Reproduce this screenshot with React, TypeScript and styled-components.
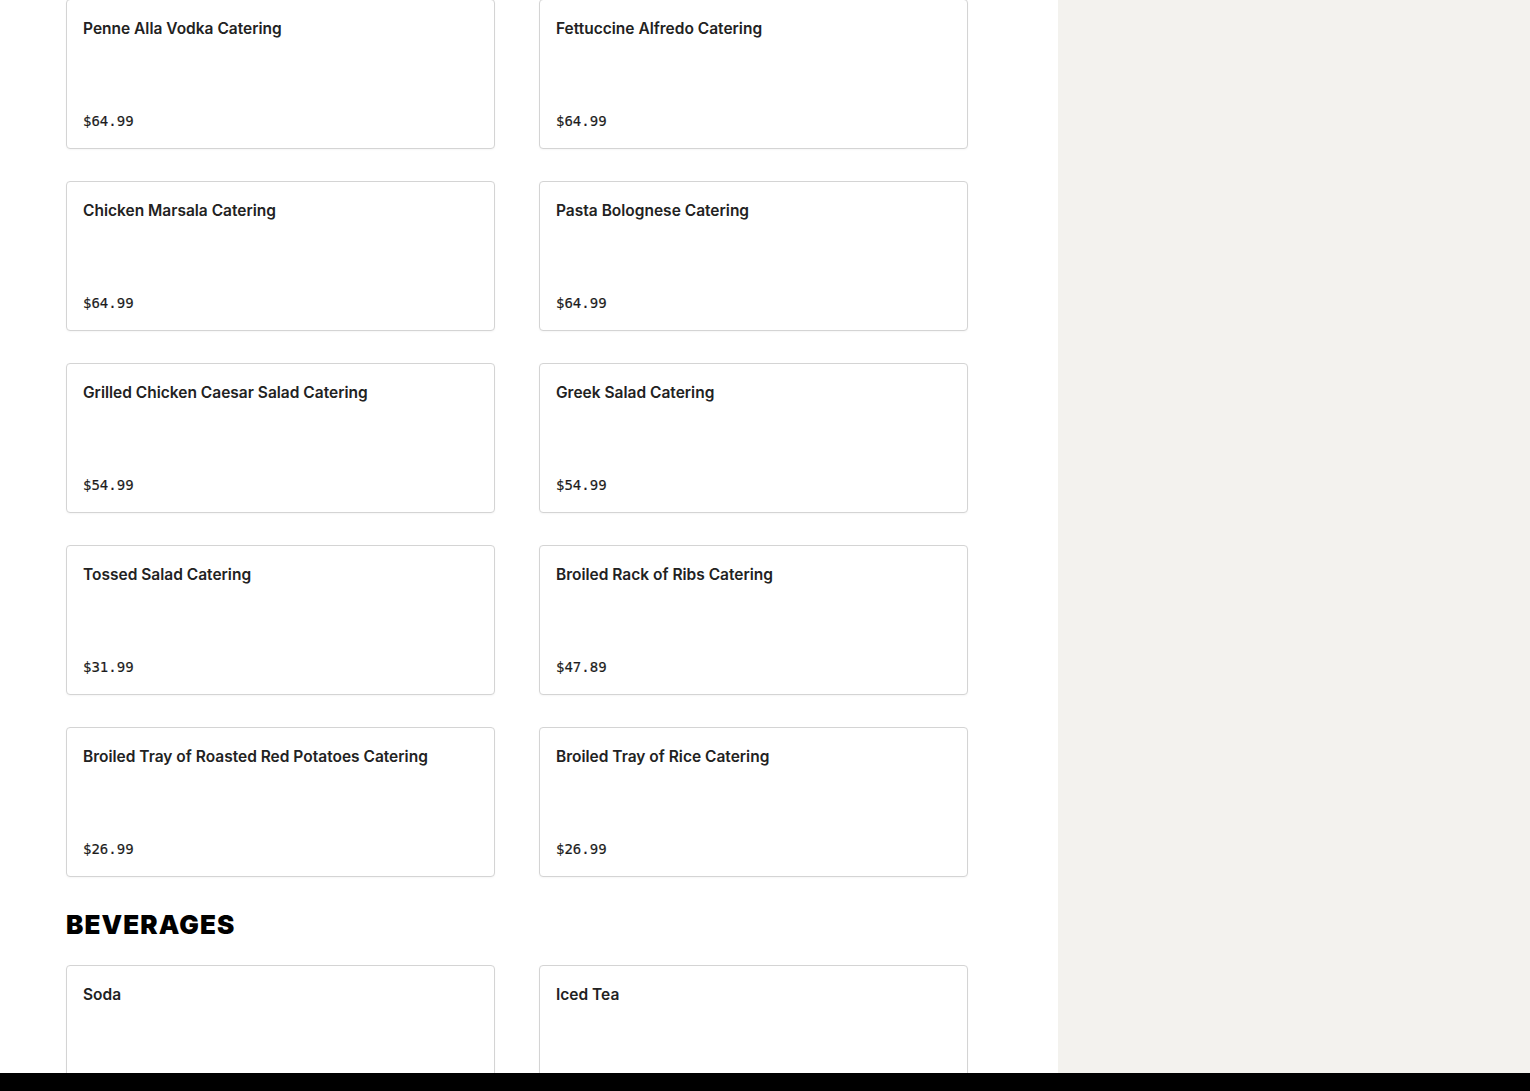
import React from 'react';
import styled, { createGlobalStyle } from 'styled-components';

const GlobalStyle = createGlobalStyle`
  html, body {
    margin: 0;
    padding: 0;
    background: #fff;
  }
  body {
    font-family: Inter, "Liberation Sans", sans-serif;
    overflow: hidden;
  }
`;

const Page = styled.div`
  height: 100vh;
  display: flex;
  flex-direction: column;
`;

const Body = styled.div`
  flex: 1;
  min-height: 0;
  overflow: hidden;
  display: grid;
  grid-template-columns: 1058px 1fr;
`;

const MenuColumn = styled.main`
  padding: 0 0 0 66px;
  margin-top: -1px;
`;

const Sidebar = styled.aside`
  background: #f3f2ee;
`;

const ItemGrid = styled.div`
  display: grid;
  grid-template-columns: 429px 429px;
  column-gap: 44px;
  row-gap: 32px;
`;

const ItemCard = styled.div`
  box-sizing: border-box;
  height: 150px;
  border: 1px solid #d4d4d4;
  border-radius: 4px;
  background: #fff;
  padding: 17px 16px 17px;
  display: flex;
  flex-direction: column;
  justify-content: space-between;
  box-shadow: 0 1px 2px rgba(0, 0, 0, 0.04);
`;

const ItemName = styled.div`
  font-size: 15.5px;
  line-height: 24px;
  font-weight: 560;
  color: #222;
`;

const ItemPrice = styled.div`
  font-family: "DejaVu Sans Mono", "Liberation Mono", monospace;
  font-size: 14px;
  line-height: 20px;
  color: #1c1c1c;
  -webkit-text-stroke: 0.2px #1c1c1c;
`;

const SectionTitle = styled.h2`
  margin: 32px 0 24px;
  font-family: Inter, "Liberation Sans", sans-serif;
  font-weight: 900;
  font-size: 26px;
  line-height: 32px;
  letter-spacing: 1.1px;
  color: #000;
`;

const BottomBar = styled.div`
  height: 18px;
  background: #000;
  flex-shrink: 0;
`;

interface MenuItem {
  name: string;
  price?: string;
}

const catering: MenuItem[] = [
  { name: 'Penne Alla Vodka Catering', price: '$64.99' },
  { name: 'Fettuccine Alfredo Catering', price: '$64.99' },
  { name: 'Chicken Marsala Catering', price: '$64.99' },
  { name: 'Pasta Bolognese Catering', price: '$64.99' },
  { name: 'Grilled Chicken Caesar Salad Catering', price: '$54.99' },
  { name: 'Greek Salad Catering', price: '$54.99' },
  { name: 'Tossed Salad Catering', price: '$31.99' },
  { name: 'Broiled Rack of Ribs Catering', price: '$47.89' },
  { name: 'Broiled Tray of Roasted Red Potatoes Catering', price: '$26.99' },
  { name: 'Broiled Tray of Rice Catering', price: '$26.99' },
];

// prices sit below the fold, behind the bottom bar
const beverages: MenuItem[] = [{ name: 'Soda' }, { name: 'Iced Tea' }];

const App: React.FC = () => {
  return (
    <Page>
      <GlobalStyle />
      <Body>
        <MenuColumn>
          <ItemGrid>
            {catering.map((item) => (
              <ItemCard key={item.name}>
                <ItemName>{item.name}</ItemName>
                <ItemPrice>{item.price}</ItemPrice>
              </ItemCard>
            ))}
          </ItemGrid>
          <SectionTitle>BEVERAGES</SectionTitle>
          <ItemGrid>
            {beverages.map((item) => (
              <ItemCard key={item.name}>
                <ItemName>{item.name}</ItemName>
                {item.price && <ItemPrice>{item.price}</ItemPrice>}
              </ItemCard>
            ))}
          </ItemGrid>
        </MenuColumn>
        <Sidebar />
      </Body>
      <BottomBar />
    </Page>
  );
};

export default App;
